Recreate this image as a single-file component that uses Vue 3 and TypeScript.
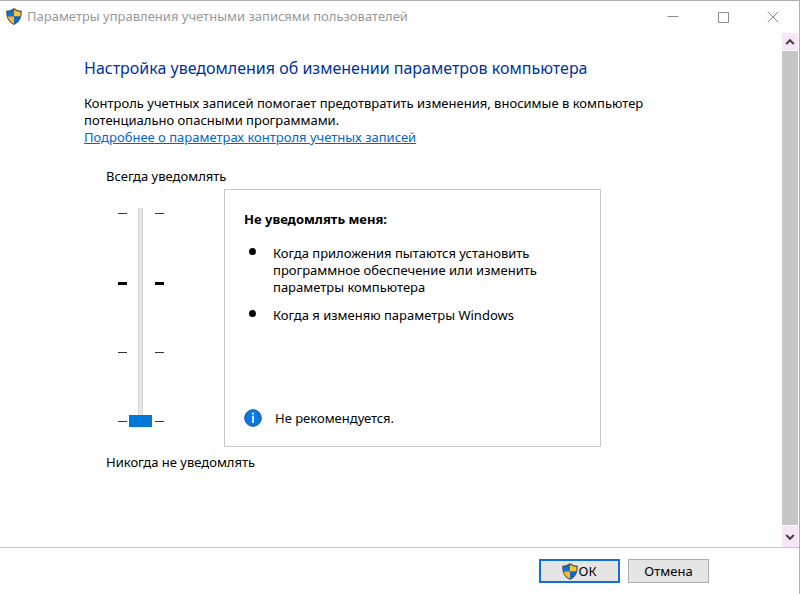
<script setup lang="ts">
import { computed, defineComponent, h, ref } from 'vue'

interface Level {
  title: string
  items: string[]
  note: string
}

const titleText = 'Параметры управления учетными записями пользователей'

const levels: Level[] = [
  {
    title: 'Не уведомлять меня:',
    items: [
      'Когда приложения пытаются установить программное обеспечение или изменить параметры компьютера',
      'Когда я изменяю параметры Windows',
    ],
    note: 'Не рекомендуется.',
  },
]

const level = ref(0)
const current = computed<Level>(() => levels[level.value] ?? levels[0])

// Four notches, top to bottom; the second one is the default level.
const notches = [
  { id: 3, strong: false },
  { id: 2, strong: true },
  { id: 1, strong: false },
  { id: 0, strong: false },
]

const ShieldIcon = defineComponent({
  setup() {
    const outline = 'M8 0C6.200 1.600 3.400 2.600 .2 2.800C.1 9.500 2 14 8 17C14 14 15.900 9.500 15.800 2.800C12.600 2.600 9.800 1.600 8 0Z'
    const left = 'M8 1.500C6.200 2.900 4 3.700 1.500 4C1.400 5.700 1.500 7.200 1.800 8.500H8Z'
    const right = 'M8 1.500C9.800 2.900 12 3.700 14.500 4C14.600 5.700 14.500 7.200 14.200 8.500H8Z'
    const leftLow = 'M8 8.500H1.800C2.500 11.800 4.400 14.200 8 15.800Z'
    const rightLow = 'M8 8.500H14.200C13.500 11.800 11.600 14.200 8 15.800Z'
    return () =>
      h('svg', { viewBox: '0 0 16 17', width: 16, height: 17, 'aria-hidden': 'true' }, [
        h('path', { d: outline, fill: '#4c5257' }),
        h('path', { d: left, fill: '#0b73dc' }),
        h('path', { d: right, fill: '#fdc430' }),
        h('path', { d: leftLow, fill: '#fdbb2a' }),
        h('path', { d: rightLow, fill: '#0b68cf' }),
      ])
  },
})
</script>

<template>
  <div class="window">
    <header class="titlebar">
      <ShieldIcon />
      <span class="caption">{{ titleText }}</span>
      <div class="controls">
        <button type="button" aria-label="Свернуть">
          <svg width="12" height="12" viewBox="0 0 12 12"><path d="M.5 5.500H11.500" /></svg>
        </button>
        <button type="button" aria-label="Развернуть">
          <svg width="12" height="12" viewBox="0 0 12 12"><path d="M1.500 1.500H11.500V11.500H1.500Z" /></svg>
        </button>
        <button type="button" aria-label="Закрыть">
          <svg width="12" height="12" viewBox="0 0 12 12"><path d="M.7 .7L11.300 11.300M11.300 .7L.7 11.300" /></svg>
        </button>
      </div>
    </header>

    <div class="body">
      <main class="content">
        <h1>Настройка уведомления об изменении параметров компьютера</h1>
        <p class="intro">
          Контроль учетных записей помогает предотвратить изменения, вносимые в компьютер
          потенциально опасными программами.
        </p>
        <a class="more" href="#">Подробнее о параметрах контроля учетных записей</a>

        <section class="settings">
          <label class="top-label" for="level">Всегда уведомлять</label>
          <div class="row">
            <div class="slider">
              <div class="notches">
                <span v-for="n in notches" :key="n.id" :class="{ strong: n.strong }"></span>
              </div>
              <input id="level" v-model.number="level" type="range" min="0" max="3" step="1" />
              <div class="notches">
                <span v-for="n in notches" :key="n.id" :class="{ strong: n.strong }"></span>
              </div>
            </div>
            <div class="panel">
              <h2>{{ current.title }}</h2>
              <ul>
                <li v-for="item in current.items" :key="item">{{ item }}</li>
              </ul>
              <p class="note">
                <svg width="18" height="18" viewBox="0 0 18 18" aria-hidden="true">
                  <circle cx="9" cy="9" r="8.300" fill="#0a78dc" stroke="#0b559f" />
                  <circle cx="9" cy="4.600" r="1.100" fill="#fff" />
                  <path d="M9 6.800V14" stroke="#fff" stroke-width="1.600" />
                </svg>
                {{ current.note }}
              </p>
            </div>
          </div>
          <span class="bottom-label">Никогда не уведомлять</span>
        </section>
      </main>

      <div class="scrollbar">
        <button type="button" aria-label="Прокрутить вверх">
          <svg width="10" height="8" viewBox="0 0 10 8"><path d="M1.200 6L5 2.200L8.800 6" /></svg>
        </button>
        <div class="thumb"></div>
        <button type="button" class="down" aria-label="Прокрутить вниз">
          <svg width="10" height="8" viewBox="0 0 10 8"><path d="M1.200 2L5 5.800L8.800 2" /></svg>
        </button>
      </div>
    </div>

    <footer class="footer">
      <button type="button" class="primary"><ShieldIcon />ОК</button>
      <button type="button">Отмена</button>
    </footer>
  </div>
</template>

<style>
body {
  margin: 0;
  background: #fff;
}
</style>

<style scoped>
* {
  box-sizing: border-box;
}

.window {
  display: flex;
  flex-direction: column;
  min-height: 100vh;
  border-top: 1px solid #b0b0b0;
  border-right: 1px solid #b0b0b0;
  background: #fff;
  color: #000;
  font-family: 'Noto Sans', 'Open Sans', sans-serif;
  font-size: 13px;
  line-height: 17px;
}

button {
  font: inherit;
  color: inherit;
}

.titlebar {
  display: flex;
  align-items: center;
  gap: 5px;
  height: 31px;
  padding: 0 1px 0 6px;
  color: #999;
}

.controls {
  display: flex;
  margin-left: auto;
}

.controls button {
  display: flex;
  align-items: center;
  justify-content: center;
  width: 50px;
  height: 31px;
  padding: 0;
  border: 0;
  background: none;
}

.controls path {
  fill: none;
  stroke: #8c8c8c;
}

.body {
  display: flex;
  flex: 1;
  padding-top: 1px;
}

.content {
  flex: 1;
  padding: 24px 84px 0;
}

h1 {
  margin: 0 0 16px;
  color: #003399;
  font-size: 16px;
  font-weight: 400;
  line-height: 22px;
}

.intro {
  max-width: 570px;
  margin: 0;
}

.more {
  display: block;
  width: fit-content;
  color: #0066cc;
}

.settings {
  padding: 22px 0 0 22px;
}

.top-label,
.bottom-label {
  display: block;
}

.row {
  display: flex;
  align-items: stretch;
  gap: 60px;
  margin: 4px 0 7px;
}

.slider {
  display: flex;
  gap: 2px;
  padding: 19px 0 20px 12px;
}

.slider input {
  appearance: none;
  width: 23px;
  height: 219px;
  margin: 0 1px 0 0;
  background: linear-gradient(90deg, #d6d6d6 1px, #e7e7e7 1px 4px, #d6d6d6 4px) center / 5px 100% no-repeat;
  writing-mode: vertical-lr;
  direction: rtl;
}

.slider input::-webkit-slider-thumb {
  appearance: none;
  width: 23px;
  height: 12px;
  border: 0;
  border-radius: 0;
  background: #0078d7;
}

.notches {
  display: flex;
  flex-direction: column;
  justify-content: space-between;
  width: 9px;
  height: 219px;
  padding: 5px 0;
}

.notches span {
  height: 1px;
  background: #333;
}

.notches .strong {
  height: 3px;
  background: #000;
}

.panel {
  display: flex;
  flex: 1;
  flex-direction: column;
  max-width: 377px;
  padding: 21px 19px 19px;
  border: 1px solid #c8c8c8;
}

h2 {
  margin: 0 0 17px;
  font-size: 13px;
  font-weight: 700;
  line-height: 17px;
}

ul {
  display: grid;
  gap: 11px;
  max-width: 310px;
  margin: 0;
  padding: 0;
  list-style: none;
}

li {
  display: flex;
  gap: 17px;
  padding-left: 5px;
}

li::before {
  flex: none;
  width: 7px;
  height: 7px;
  margin-top: 3px;
  border-radius: 50%;
  background: #000;
  content: '';
}

.note {
  display: flex;
  align-items: center;
  gap: 13px;
  margin: auto 0 0;
}

.scrollbar {
  display: flex;
  flex-direction: column;
  gap: 1px;
  width: 16px;
  margin-right: 1px;
}

.scrollbar button {
  display: flex;
  align-items: center;
  justify-content: center;
  height: 17px;
  padding: 0;
  border: 0;
  background: #f8e6f8;
}

.scrollbar .down {
  height: 21px;
}

.scrollbar path {
  fill: none;
  stroke: #444;
  stroke-width: 2;
}

.thumb {
  flex: 1;
  background: #c6c6c6;
}

.footer {
  display: flex;
  justify-content: flex-end;
  gap: 8px;
  padding: 11px 90px 11px 0;
  border-top: 1px solid #c8c8c8;
}

.footer button {
  display: flex;
  align-items: center;
  justify-content: center;
  width: 81px;
  height: 24px;
  padding: 0;
  border: 1px solid #adadad;
  background: #e5e5e5;
}

.footer .primary {
  border: 2px solid #0f6fdc;
}
</style>
